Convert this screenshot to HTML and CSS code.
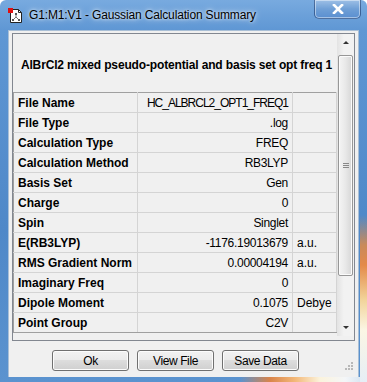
FILE: index.html
```html
<!DOCTYPE html>
<html>
<head>
<meta charset="utf-8">
<link rel="stylesheet" href="styles.css">
</head>
<body>
<div class="window">
  <div class="titlebar">
    <svg class="app-icon" width="16" height="16" viewBox="0 0 16 16">
      <path d="M2.5 1.5 H10.5 L13.5 4.5 V14.5 H2.5 Z" fill="#fff" stroke="#222"/>
      <path d="M10.5 1.5 V4.5 H13.5" fill="none" stroke="#222"/>
      <rect x="0" y="0" width="5" height="5" fill="#e01010"/>
      <path d="M8 6 V9 M8 9 L5 12 M8 9 L11 12" stroke="#777" stroke-width="1"/>
      <rect x="7" y="5" width="2" height="2" fill="#555"/>
      <rect x="4" y="11" width="2" height="2" fill="#555"/>
      <rect x="10" y="11" width="2" height="2" fill="#555"/>
    </svg>
    <span class="title">G1:M1:V1 - Gaussian Calculation Summary</span>
    <div class="close">
      <svg width="12" height="10" viewBox="0 0 12 10">
        <path d="M2 1 L10 9 M10 1 L2 9" stroke="#fff" stroke-width="2.6" stroke-linecap="square"/>
      </svg>
    </div>
  </div>
  <div class="client">
    <div class="panel">
      <div class="content">
        <div class="heading">AlBrCl2 mixed pseudo-potential and basis set opt freq 1</div>
        <table class="grid">
          <colgroup><col class="c-label"><col class="c-value"><col class="c-unit"></colgroup>
          <tr><th>File Name</th><td class="val narrow">HC_ALBRCL2_OPT1_FREQ1</td><td class="unit"></td></tr>
          <tr><th>File Type</th><td class="val">.log</td><td class="unit"></td></tr>
          <tr><th>Calculation Type</th><td class="val">FREQ</td><td class="unit"></td></tr>
          <tr><th>Calculation Method</th><td class="val">RB3LYP</td><td class="unit"></td></tr>
          <tr><th>Basis Set</th><td class="val">Gen</td><td class="unit"></td></tr>
          <tr><th>Charge</th><td class="val">0</td><td class="unit"></td></tr>
          <tr><th>Spin</th><td class="val">Singlet</td><td class="unit"></td></tr>
          <tr><th>E(RB3LYP)</th><td class="val">-1176.19013679</td><td class="unit">a.u.</td></tr>
          <tr><th>RMS Gradient Norm</th><td class="val">0.00004194</td><td class="unit">a.u.</td></tr>
          <tr><th>Imaginary Freq</th><td class="val">0</td><td class="unit"></td></tr>
          <tr><th>Dipole Moment</th><td class="val">0.1075</td><td class="unit">Debye</td></tr>
          <tr><th>Point Group</th><td class="val">C2V</td><td class="unit"></td></tr>
        </table>
      </div>
      <div class="scrollbar">
        <div class="sb-btn"><span class="tri up"></span></div>
        <div class="track">
          <div class="thumb"><span class="thumb-grip"></span></div>
        </div>
        <div class="sb-btn"><span class="tri down"></span></div>
      </div>
    </div>
    <div class="buttons">
      <button class="btn">Ok</button>
      <button class="btn">View File</button>
      <button class="btn">Save Data</button>
    </div>
    <svg class="size-grip" width="10" height="10" viewBox="0 0 10 10">
      <g fill="#b8b8b8">
        <rect x="7" y="1" width="2" height="2"/>
        <rect x="4" y="4" width="2" height="2"/>
        <rect x="7" y="4" width="2" height="2"/>
        <rect x="1" y="7" width="2" height="2"/>
        <rect x="4" y="7" width="2" height="2"/>
        <rect x="7" y="7" width="2" height="2"/>
      </g>
    </svg>
  </div>
</div>
</body>
</html>
```
FILE: styles.css
```css
* { box-sizing: border-box; }
html, body { margin: 0; padding: 0; background: #fff; }
.window {
  width: 367px;
  height: 382px;
  display: flex;
  flex-direction: column;
  background:
    linear-gradient(180deg, rgba(0,0,0,0) 215px, #c98a5a 245px, #e48a4a 265px, #f2d49a 300px, #fbf6e4 330px, #e6eef6 382px) right top / 7px 100% no-repeat,
    linear-gradient(90deg, rgba(0,0,0,0) 240px, #d9844a 270px, #f3b878 295px, #fbf3dc 320px, #f4f6f8 345px, #cfe0f0 367px) left bottom / 100% 5px no-repeat,
    linear-gradient(180deg, #78aadf 0px, #5f97d4 30px, #4f88c8 60%, #5b93cf 100%);
  border-radius: 6px 6px 0 0;
  font-family: "Liberation Sans", Arial, sans-serif;
}
.titlebar {
  height: 30px;
  display: flex;
  align-items: flex-start;
  flex: none;
}
.app-icon { margin: 8px 0 0 8px; flex: none; }
.title {
  margin: 8px 0 0 5px;
  font-size: 12px;
  line-height: 14px;
  color: #000;
  letter-spacing: -0.15px;
  text-shadow: 0 0 6px rgba(255,255,255,0.9), 0 0 3px rgba(255,255,255,0.8);
}
.close {
  margin-left: auto;
  margin-right: 6px;
  width: 47px;
  height: 19px;
  border: 1px solid rgba(30,60,110,0.6);
  border-top: none;
  border-radius: 0 0 5px 5px;
  background: linear-gradient(180deg, #9ec0e6, #6f9fd6 50%, #5a8fd0);
  box-shadow: inset 0 0 0 1px rgba(255,255,255,0.45);
  display: flex;
  align-items: center;
  justify-content: center;
}
.client {
  position: relative;
  margin: 0 8px 5px 8px;
  flex: 1;
  background: #f0f0f0;
  border: 1px solid #a9bfd6;
  border-bottom: none;
  display: flex;
  flex-direction: column;
}
.panel {
  margin: 2px 3px 0 3px;
  height: 308px;
  border: 1px solid #828790;
  display: flex;
  background: #f0f0f0;
}
.content {
  width: 324px;
  display: flex;
  flex-direction: column;
}
.heading {
  height: 58px;
  display: flex;
  align-items: center;
  justify-content: center;
  font-weight: bold;
  font-size: 12px;
  letter-spacing: -0.15px;
  color: #000;
  padding-left: 3px;
  padding-top: 4px;
}
.grid {
  border-collapse: collapse;
  table-layout: fixed;
  width: 323px;
  font-size: 12px;
  color: #000;
}
.c-label { width: 124px; }
.c-value { width: 155px; }
.c-unit { width: 44px; }
.grid tr { height: 20px; }
.grid th, .grid td {
  border: 1px solid #d4d4d4;
  padding: 0 4px;
  height: 20px;
  white-space: nowrap;
  overflow: hidden;
}
.grid tr:first-child th, .grid tr:first-child td { border-top-color: #a0a0a0; }
.grid th {
  text-align: left;
  font-weight: bold;
  border-left-color: #a0a0a0;
}
.grid td.val { text-align: right; letter-spacing: -0.3px; }
.grid td.narrow { letter-spacing: -1px; }
.grid td.unit { text-align: left; }
.grid tr:last-child th, .grid tr:last-child td { border-bottom-color: #a0a0a0; }
.scrollbar {
  width: 17px;
  display: flex;
  flex-direction: column;
  background: linear-gradient(90deg, #e3e3e3, #f2f2f2 40%, #f2f2f2);
  height: 302px;
}
.sb-btn {
  height: 17px;
  display: flex;
  align-items: center;
  justify-content: center;
  flex: none;
}
.tri { width: 0; height: 0; border-left: 3px solid transparent; border-right: 3px solid transparent; }
.tri.up { border-bottom: 3px solid #333; }
.tri.down { border-top: 3px solid #333; }
.track { flex: 1; padding: 4px 1px; }
.thumb {
  height: 221px;
  border: 1px solid #979797;
  border-radius: 2px;
  background: linear-gradient(90deg, #f4f4f4, #e8e8e8 50%, #d6d6d6);
  box-shadow: inset 0 0 0 1px #fbfbfb;
  display: flex;
  align-items: center;
  justify-content: center;
}
.thumb-grip {
  width: 6px;
  height: 5px;
  border-top: 1px solid #888;
  border-bottom: 1px solid #888;
  background: linear-gradient(180deg, transparent 1px, #888 1px, #888 2px, transparent 2px);
}
.buttons {
  display: flex;
  gap: 8px;
  padding-left: 43px;
  margin-top: 9px;
}
.btn {
  width: 77px;
  height: 21px;
  border: 1px solid #707070;
  border-radius: 3px;
  background: linear-gradient(180deg, #f2f2f2 0%, #ebebeb 45%, #dddddd 50%, #cfcfcf 100%);
  box-shadow: inset 0 0 0 1px #fcfcfc;
  font-family: "Liberation Sans", Arial, sans-serif;
  font-size: 12px;
  letter-spacing: -0.4px;
  color: #000;
  padding: 0;
}
.size-grip { position: absolute; right: 4px; bottom: 6px; }
```
